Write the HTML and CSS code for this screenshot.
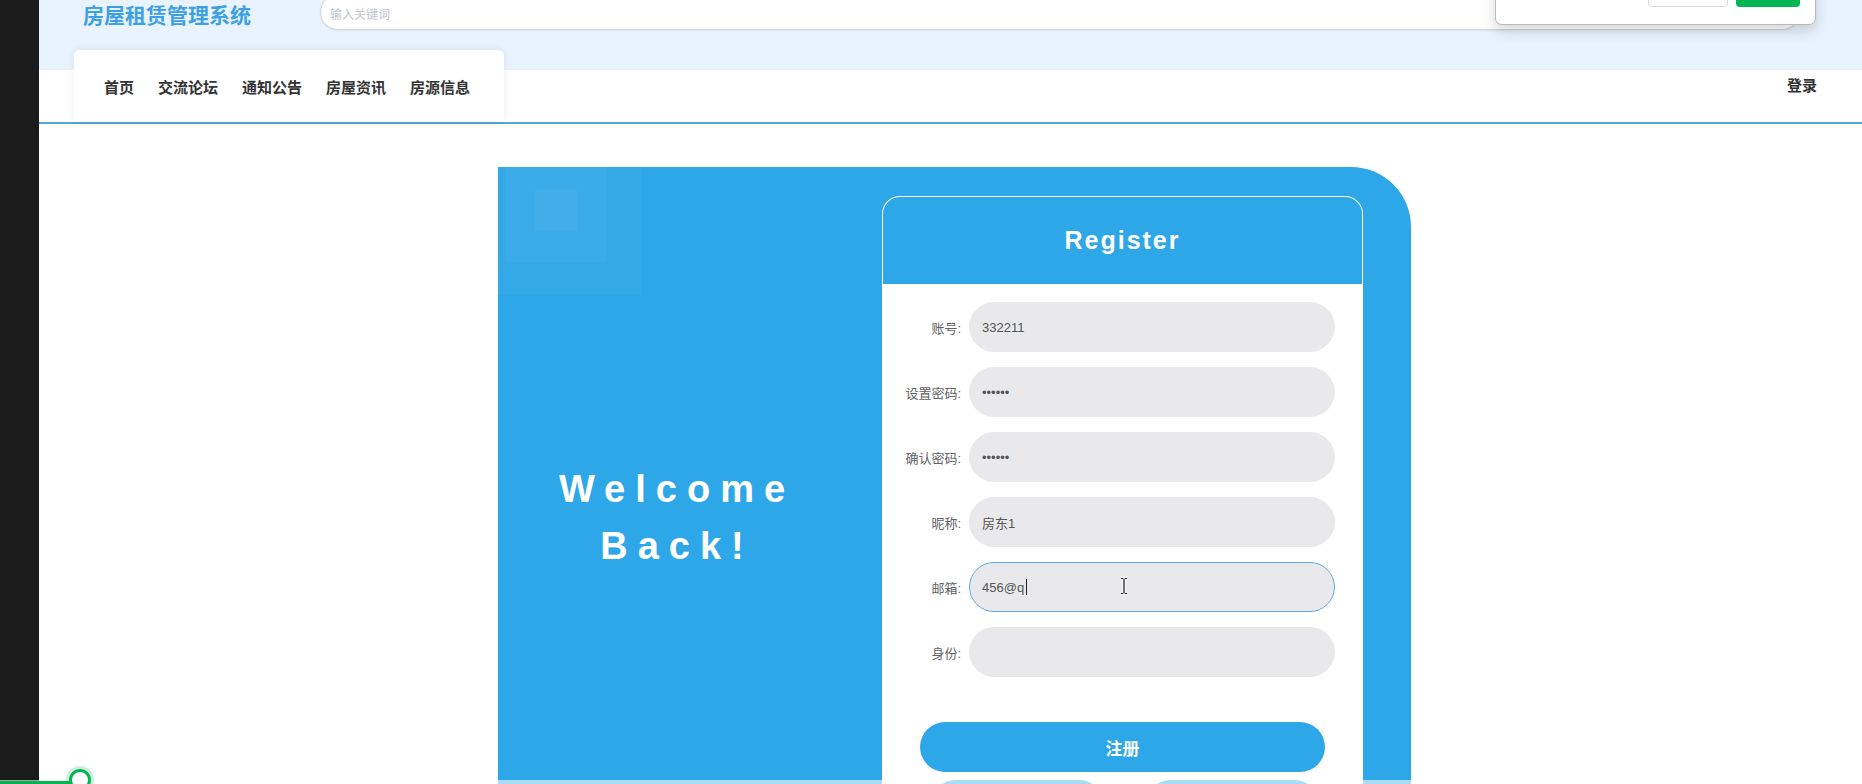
FILE: index.html
```html
<!DOCTYPE html>
<html lang="zh-CN">
<head>
  <meta charset="UTF-8" />
  <meta name="viewport" content="width=device-width, initial-scale=1.0" />
  <title>房屋租赁管理系统 - 注册</title>
  <link rel="stylesheet" href="styles.css">
</head>
<body>
  <div class="side"></div>

  <div class="page">
    <div class="topbar">
      <div class="topbar-inner">
        <div class="logo">房屋租赁管理系统</div>
        <input class="search" type="text" placeholder="输入关键词" />
      </div>
      <div class="popup">
        <span class="popup-btn"></span>
        <span class="popup-btn ok"></span>
      </div>
    </div>

    <div class="navbar">
      <ul class="nav-card">
        <li>首页</li>
        <li>交流论坛</li>
        <li>通知公告</li>
        <li>房屋资讯</li>
        <li>房源信息</li>
      </ul>
      <div class="login-link">登录</div>
    </div>

    <div class="panel">
      <div class="deco deco-1"></div>
      <div class="deco deco-2"></div>
      <div class="deco deco-3"></div>

      <div class="welcome">
        <h2>Welcome<br>Back!</h2>
      </div>

      <div class="card">
        <div class="card-head">Register</div>
        <form class="form">
          <div class="row">
            <label>账号:</label>
            <input type="text" value="332211" />
          </div>
          <div class="row">
            <label>设置密码:</label>
            <input type="password" value="123456" />
          </div>
          <div class="row">
            <label>确认密码:</label>
            <input type="password" value="123456" />
          </div>
          <div class="row">
            <label>昵称:</label>
            <input type="text" value="房东1" />
          </div>
          <div class="row">
            <label>邮箱:</label>
            <input class="focused" type="text" value="456@q" />
          </div>
          <div class="row">
            <label>身份:</label>
            <input type="text" value="" />
          </div>

          <button type="button" class="submit">注册</button>
          <div class="sub-actions">
            <button type="button" class="sub-btn"></button>
            <button type="button" class="sub-btn"></button>
          </div>
        </form>
      </div>
    </div>
  </div>

  <span class="caret"></span>
  <svg class="ibeam" width="10" height="18" viewBox="0 0 10 18">
    <path d="M2 1.5h2.2M5.8 1.5H8M5 2v14M2 16.5h2.2M5.8 16.5H8" stroke="#fff" stroke-width="3" fill="none"/>
    <path d="M2 1.5h2.2M5.8 1.5H8M5 2v14M2 16.5h2.2M5.8 16.5H8" stroke="#111" stroke-width="1.2" fill="none"/>
  </svg>

  <div class="bottom-veil"></div>
  <div class="progress"></div>
  <div class="thumb"></div>
</body>
</html>
```

FILE: styles.css
```css
:root {
  --blue: #2ea7e8;
  --band: #e9f3fd;
  --text: #333333;
  --label: #606266;
  --field: #e9e9eb;
}

* {
  box-sizing: border-box;
}

html, body {
  margin: 0;
  height: 100%;
}

body {
  display: flex;
  font-family: "Liberation Sans", "Noto Sans CJK SC", sans-serif;
  background: #ffffff;
  color: var(--text);
  overflow: hidden;
}

.side {
  width: 39px;
  flex-shrink: 0;
  background: #1b1b1b;
}

.page {
  flex: 1;
  position: relative;
}

/* header band */
.topbar {
  height: 70px;
  background: var(--band);
  position: relative;
}

.topbar-inner {
  display: flex;
  align-items: center;
  height: 28px;
  padding-left: 44px;
}

.logo {
  font-size: 21px;
  font-weight: bold;
  color: #3ea0e4;
  white-space: nowrap;
}

.search {
  margin-left: 69px;
  width: 1480px;
  height: 36px;
  margin-top: -5px;
  border: 1px solid #d2d4d8;
  border-radius: 18px;
  background: #fff;
  padding: 7px 0 0 9px;
  font-size: 12px;
  font-family: inherit;
  box-shadow: 0 1px 2px rgba(0,0,0,0.06);
}

.search::placeholder {
  color: #c0c4cc;
}

.popup {
  position: absolute;
  top: -41px;
  left: 1456px;
  width: 321px;
  height: 66px;
  z-index: 2;
  background: #fff;
  border: 1px solid #b9b9b9;
  border-radius: 0 0 7px 7px;
  box-shadow: 0 6px 14px rgba(0,0,0,0.16);
  display: flex;
  justify-content: flex-end;
  align-items: flex-end;
  gap: 8px;
  padding: 0 15px 17px 0;
}

.popup-btn {
  width: 80px;
  height: 30px;
  border: 1px solid #d9d9d9;
  border-radius: 4px;
  background: #fff;
}

.popup-btn.ok {
  width: 64px;
  border: none;
  background: #00b552;
}

/* nav */
.navbar {
  position: relative;
  margin-top: -20px;
  height: 74px;
  border-bottom: 2px solid #4ea8db;
  display: flex;
  justify-content: space-between;
  align-items: center;
  padding-right: 45px;
}

.nav-card {
  list-style: none;
  margin: 0 0 0 35px;
  padding: 0 34px 0 30px;
  height: 72px;
  align-self: flex-start;
  background: #fff;
  border-radius: 6px 6px 0 0;
  box-shadow: 0 -1px 8px rgba(0,0,0,0.07);
  display: flex;
  align-items: center;
  gap: 24px;
}

.nav-card li,
.login-link {
  font-size: 15px;
  font-weight: bold;
  color: var(--text);
}

.login-link {
  margin-top: -3px;
}

/* main panel */
.panel {
  position: relative;
  margin: 43px 0 0 459px;
  width: 913px;
  height: 700px;
  background: var(--blue);
  border-radius: 0 60px 0 0;
  display: flex;
  padding-top: 29px;
}

.deco {
  position: absolute;
  top: 0;
  background: rgba(255,255,255,0.03);
}

.deco-1 { left: 0; width: 143px; height: 128px; }
.deco-2 { left: 7px; width: 102px; height: 95px; }
.deco-3 { left: 37px; top: 22px; width: 42px; height: 42px; }

.welcome {
  width: 358px;
  padding-top: 265px;
  text-align: center;
}

.welcome h2 {
  margin: 0;
  color: #fff;
  font-size: 38px;
  line-height: 57px;
  letter-spacing: 10px;
  font-weight: bold;
}

.card {
  margin-left: 26px;
  width: 481px;
  align-self: flex-start;
  background: #fff;
  border: 1px solid rgba(255,255,255,0.65);
  border-radius: 18px 18px 0 0;
  overflow: hidden;
}

.card-head {
  height: 87px;
  background: var(--blue);
  color: #fff;
  font-size: 25px;
  font-weight: bold;
  letter-spacing: 2px;
  display: flex;
  align-items: center;
  justify-content: center;
}

.form {
  padding: 18px 0 0 0;
}

.row {
  display: flex;
  align-items: center;
  margin-bottom: 15px;
  padding: 0 27px 0 19px;
}

.row label {
  width: 59px;
  text-align: right;
  font-size: 13px;
  color: var(--label);
  margin-right: 8px;
}

.row input {
  flex: 1;
  height: 50px;
  border: 1px solid var(--field);
  border-radius: 25px;
  background: var(--field);
  padding: 0 12px;
  font-size: 13px;
  color: #555;
  font-family: inherit;
  outline: none;
}

.row input.focused {
  border-color: #5aaee6;
}

.submit {
  display: block;
  margin: 45px 0 0 37px;
  width: 405px;
  height: 50px;
  border: none;
  border-radius: 25px;
  background: var(--blue);
  color: #fff;
  font-size: 17px;
  font-weight: bold;
  font-family: inherit;
}

.sub-actions {
  display: flex;
  gap: 46px;
  margin: 8px 0 0 50px;
}

.sub-btn {
  width: 169px;
  height: 44px;
  border: none;
  border-radius: 22px;
  background: var(--blue);
}

/* screen capture overlays */
.caret {
  position: fixed;
  left: 1026px;
  top: 579px;
  width: 1px;
  height: 16px;
  background: #222;
}

.ibeam {
  position: fixed;
  left: 1119px;
  top: 577px;
}

.bottom-veil {
  position: fixed;
  left: 0;
  right: 0;
  bottom: 0;
  height: 4px;
  background: rgba(255,255,255,0.6);
}

.progress {
  position: fixed;
  left: 0;
  bottom: 0;
  width: 72px;
  height: 3px;
  background: #00b552;
}

.thumb {
  position: fixed;
  left: 69px;
  top: 769px;
  width: 22px;
  height: 22px;
  border-radius: 50%;
  background: #fff;
  border: 3px solid #00b552;
  box-shadow: 0 0 0 3px rgba(0,181,82,0.2);
}
```
